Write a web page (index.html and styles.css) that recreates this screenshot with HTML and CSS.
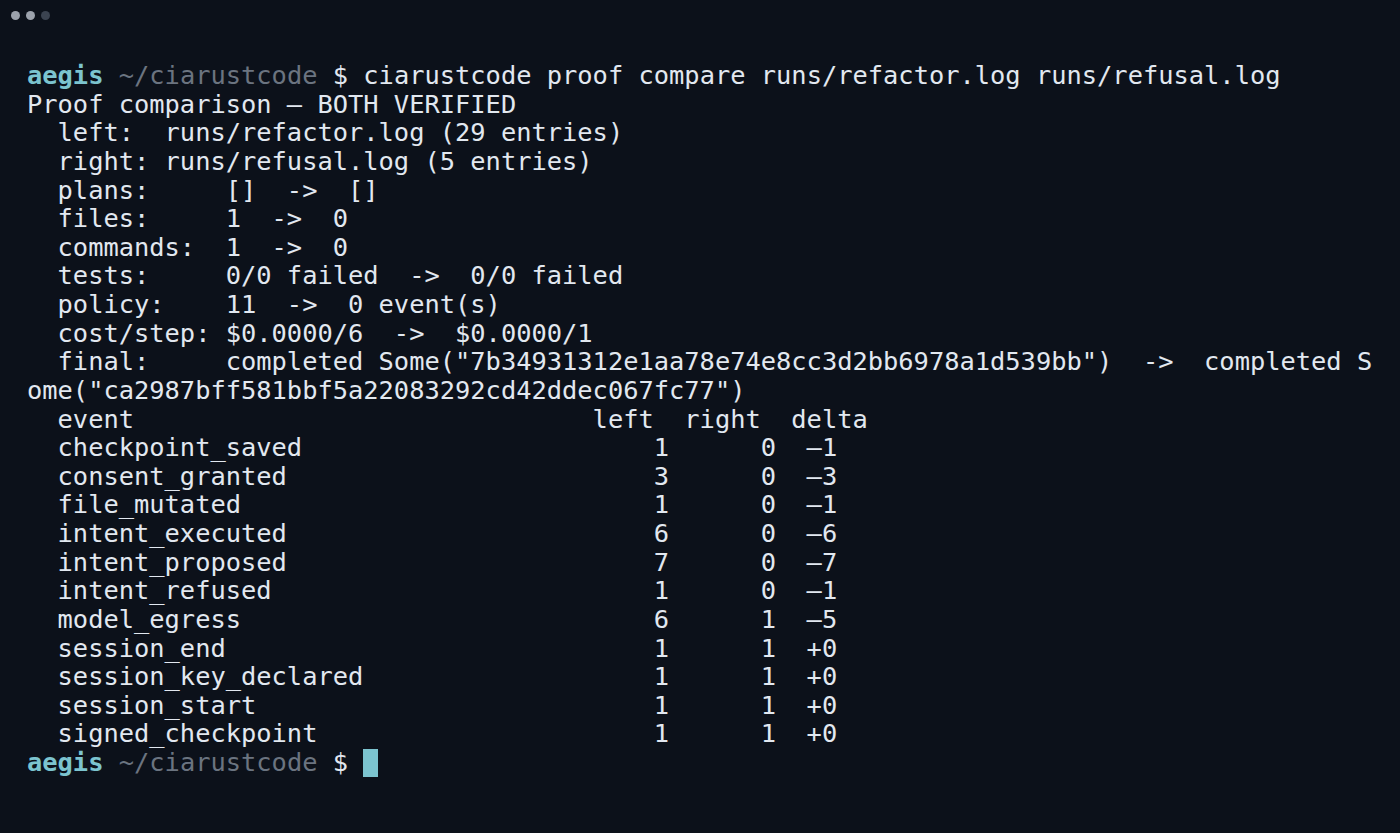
FILE: index.html
```html
<!DOCTYPE html>
<html>
<head>
<meta charset="utf-8">
<link rel="stylesheet" href="styles.css">
</head>
<body>
<div class="window">
  <div class="titlebar">
    <span class="dot dot-light"></span>
    <span class="dot dot-light"></span>
    <span class="dot dot-dark"></span>
  </div>
  <pre class="term"><span class="user">aegis</span> <span class="path">~/ciarustcode</span> $ ciarustcode proof compare runs/refactor.log runs/refusal.log
Proof comparison — BOTH VERIFIED
  left:  runs/refactor.log (29 entries)
  right: runs/refusal.log (5 entries)
  plans:     []  ->  []
  files:     1  ->  0
  commands:  1  ->  0
  tests:     0/0 failed  ->  0/0 failed
  policy:    11  ->  0 event(s)
  cost/step: $0.0000/6  ->  $0.0000/1
  final:     completed Some("7b34931312e1aa78e74e8cc3d2bb6978a1d539bb")  ->  completed S
ome("ca2987bff581bbf5a22083292cd42ddec067fc77")
  event                              left  right  delta
  checkpoint_saved                       1      0  —1
  consent_granted                        3      0  —3
  file_mutated                           1      0  —1
  intent_executed                        6      0  —6
  intent_proposed                        7      0  —7
  intent_refused                         1      0  —1
  model_egress                           6      1  —5
  session_end                            1      1  +0
  session_key_declared                   1      1  +0
  session_start                          1      1  +0
  signed_checkpoint                      1      1  +0
<span class="user">aegis</span> <span class="path">~/ciarustcode</span> $ <span class="cursor"></span></pre>
</div>
</body>
</html>
```

FILE: styles.css
```css
html, body {
  margin: 0;
  padding: 0;
  background: #0c111a;
}

.window {
  width: 1400px;
  height: 833px;
  background: #0c111a;
  overflow: hidden;
}

.titlebar {
  display: flex;
  align-items: center;
  gap: 6px;
  height: 30px;
  padding-left: 11px;
}

.dot {
  width: 9px;
  height: 9px;
  border-radius: 50%;
}

.dot-light {
  background: #9ca2ac;
}

.dot-dark {
  background: #3b4350;
}

.term {
  margin: 0;
  padding: 31px 0 0 27px;
  font-family: "DejaVu Sans Mono", "Liberation Mono", monospace;
  font-size: 25.4px;
  line-height: 28.625px;
  color: #e2e8f0;
  white-space: pre;
}

.user {
  color: #7cc4cf;
  font-weight: bold;
}

.path {
  color: #6b7480;
}

.cursor {
  display: inline-block;
  width: 15px;
  height: 28px;
  background: #7cc4cf;
  vertical-align: -6px;
}
```
